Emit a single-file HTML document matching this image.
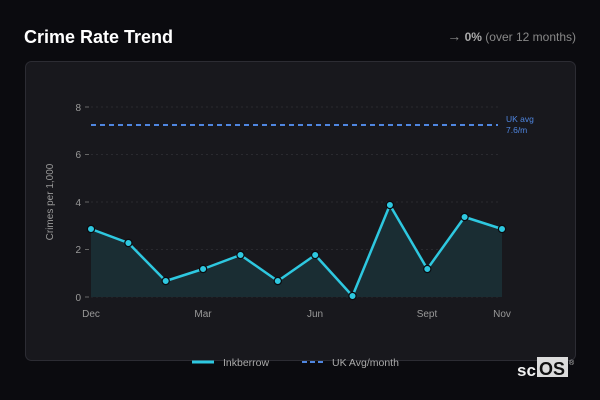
<!DOCTYPE html>
<html><head><meta charset="utf-8"><style>
html,body{margin:0;padding:0;width:600px;height:400px;background:#0b0b0f;overflow:hidden;font-family:"Liberation Sans",sans-serif;}
</style></head><body>
<svg width="600" height="400" xmlns="http://www.w3.org/2000/svg" style="position:absolute;left:0;top:0">
<rect x="0" y="0" width="600" height="400" fill="#0b0b0f"/>
<text x="24" y="43" fill="#ffffff" font-size="18" font-weight="bold" font-family="Liberation Sans">Crime Rate Trend</text>
<text x="576" y="41" text-anchor="end" font-size="12" fill="#888" font-family="Liberation Sans"><tspan font-size="14">→</tspan> <tspan font-weight="bold" fill="#aaa">0%</tspan> (over 12 months)</text>
<rect x="25.5" y="61.5" width="550" height="299" rx="6" fill="#18181d" stroke="#2c2c33"/>
<g stroke="#2a2a30" stroke-dasharray="2,3" stroke-width="1">
<line x1="91" y1="107" x2="498" y2="107"/><line x1="91" y1="154.5" x2="498" y2="154.5"/>
<line x1="91" y1="202" x2="498" y2="202"/><line x1="91" y1="249.5" x2="498" y2="249.5"/>
<line x1="91" y1="297" x2="498" y2="297"/>
</g>
<g fill="#999" font-size="10" font-family="Liberation Sans" text-anchor="end">
<text x="81" y="111">8</text><text x="81" y="158">6</text><text x="81" y="206">4</text><text x="81" y="253">2</text><text x="81" y="301">0</text>
</g>
<g stroke="#666"><line x1="85" y1="107" x2="89" y2="107"/><line x1="85" y1="154.5" x2="89" y2="154.5"/><line x1="85" y1="202" x2="89" y2="202"/><line x1="85" y1="249.5" x2="89" y2="249.5"/><line x1="85" y1="297" x2="89" y2="297"/></g>
<text transform="translate(53,202) rotate(-90)" text-anchor="middle" fill="#999" font-size="10" font-family="Liberation Sans">Crimes per 1,000</text>
<line x1="91" y1="125" x2="498" y2="125" stroke="#4f86e0" stroke-width="2" stroke-dasharray="5,4"/>
<text x="506" y="122" fill="#4f86e0" font-size="8.5" font-family="Liberation Sans">UK avg</text>
<text x="506" y="133" fill="#4f86e0" font-size="8.5" font-family="Liberation Sans">7.6/m</text>
<polygon fill="#1a2d33" points="91,297 91,229 128.4,243 165.7,281 203.1,269 240.5,255 277.8,281 315.2,255 352.5,296 389.9,205 427.3,269 464.6,217 502,229 502,297"/>
<polyline fill="none" stroke="#2ec8e0" stroke-width="2.5" stroke-linejoin="round" points="91,229 128.4,243 165.7,281 203.1,269 240.5,255 277.8,281 315.2,255 352.5,296 389.9,205 427.3,269 464.6,217 502,229"/>
<g fill="#2ec8e0" stroke="#0b0b0f" stroke-width="1.2">
<circle cx="91" cy="229" r="3.6"/><circle cx="128.4" cy="243" r="3.6"/><circle cx="165.7" cy="281" r="3.6"/><circle cx="203.1" cy="269" r="3.6"/><circle cx="240.5" cy="255" r="3.6"/><circle cx="277.8" cy="281" r="3.6"/><circle cx="315.2" cy="255" r="3.6"/><circle cx="352.5" cy="296" r="3.6"/><circle cx="389.9" cy="205" r="3.6"/><circle cx="427.3" cy="269" r="3.6"/><circle cx="464.6" cy="217" r="3.6"/><circle cx="502" cy="229" r="3.6"/>
</g>
<g fill="#999" font-size="10" font-family="Liberation Sans" text-anchor="middle">
<text x="91" y="317">Dec</text><text x="203" y="317">Mar</text><text x="315" y="317">Jun</text><text x="427" y="317">Sept</text><text x="502" y="317">Nov</text>
</g>
<line x1="192" y1="362" x2="214" y2="362" stroke="#2ec8e0" stroke-width="3"/>
<text x="223" y="366" fill="#aaa" font-size="10.5" font-family="Liberation Sans">Inkberrow</text>
<line x1="302" y1="362" x2="324" y2="362" stroke="#4f86e0" stroke-width="2" stroke-dasharray="5,3"/>
<text x="332" y="366" fill="#aaa" font-size="10.5" font-family="Liberation Sans">UK Avg/month</text>
<text x="517" y="376" fill="#f0f0f0" font-size="17" font-weight="bold" font-family="Liberation Sans">sc</text>
<rect x="537" y="357" width="31" height="20" fill="#dcdcdc"/>
<text x="539" y="375" fill="#111" font-size="18" font-weight="bold" font-family="Liberation Sans">OS</text>
<text x="569" y="365" fill="#ccc" font-size="7" font-family="Liberation Sans">®</text>
</svg>
</body></html>
